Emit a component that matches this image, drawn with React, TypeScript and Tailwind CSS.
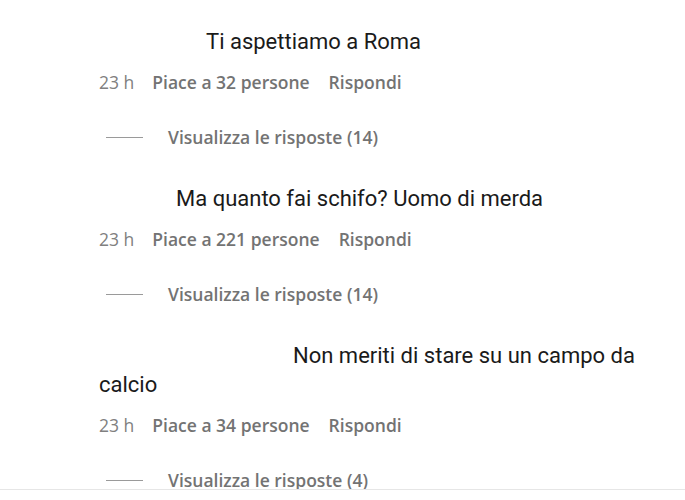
import React from 'react';

interface Comment {
  text: string;
  indent: string;
  likes: number;
  replies: number;
}

const comments: Comment[] = [
  { text: 'Ti aspettiamo a Roma', indent: 'indent-[107px]', likes: 32, replies: 14 },
  { text: 'Ma quanto fai schifo? Uomo di merda', indent: 'indent-[77px]', likes: 221, replies: 14 },
  { text: 'Non meriti di stare su un campo da calcio', indent: 'indent-[194px]', likes: 34, replies: 4 },
];

const CommentRow: React.FC<{ c: Comment }> = ({ c }) => (
  <div className="pl-[99px] pr-[25px]">
    <p
      className={`${c.indent} text-[22px] leading-[29px] text-[#1a1a1a]`}
      style={{ fontFamily: 'Roboto, "Noto Sans", sans-serif' }}
    >
      {c.text}
    </p>
    <div className="mt-[14px] flex items-center text-[17.5px] leading-[24px] text-[#737373]">
      <span className="text-[#808080]">23 h</span>
      <span className="ml-[18px] font-semibold">Piace a {c.likes} persone</span>
      <span className="ml-[19px] font-semibold">Rispondi</span>
    </div>
    <div className="mt-[31px] flex items-center text-[17.5px] leading-[24px] text-[#737373]">
      <span className="ml-[7px] h-px w-[37px] bg-[#9a9a9a]"></span>
      <span className="ml-[25px] font-semibold">Visualizza le risposte ({c.replies})</span>
    </div>
  </div>
);

const App: React.FC = () => {
  return (
    <div className="h-[500px] w-[685px] bg-white" style={{ fontFamily: '"Open Sans", "Noto Sans", sans-serif' }}>
      <div className="h-[490px] overflow-hidden border-b border-[#e6e6e6] pt-[27px]">
        <div className="flex flex-col gap-[35px]">
          {comments.map((c, i) => (
            <CommentRow key={i} c={c} />
          ))}
        </div>
      </div>
    </div>
  );
};

export default App;
